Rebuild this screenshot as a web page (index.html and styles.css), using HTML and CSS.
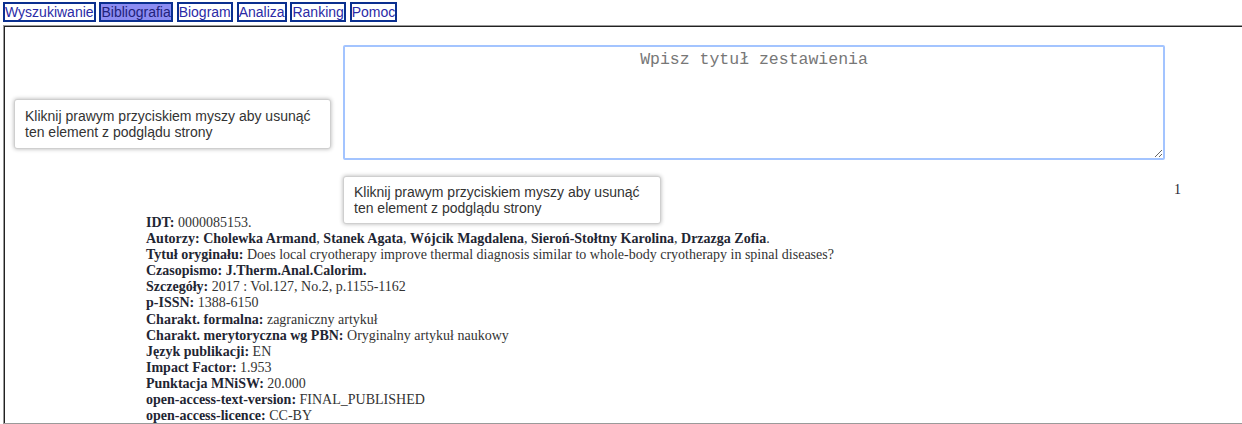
FILE: index.html
```html
<!DOCTYPE html>
<html lang="pl">
  <head>
    <meta charset="UTF-8" />
    <meta name="viewport" content="width=device-width, initial-scale=1.0" />
    <title>Bibliografia</title>
    <link rel="stylesheet" href="styles.css">
  </head>
  <body>
    <div class="menu">
      <a class="tab" href="#">Wyszukiwanie</a>
      <a class="tab active" href="#">Bibliografia</a>
      <a class="tab" href="#">Biogram</a>
      <a class="tab" href="#">Analiza</a>
      <a class="tab" href="#">Ranking</a>
      <a class="tab" href="#">Pomoc</a>
    </div>

    <div class="frame">
      <div class="title-box">
        <textarea class="title-input" placeholder="Wpisz tytuł zestawienia"></textarea>
      </div>

      <div class="page-row">
        <span class="page-no">1</span>
      </div>

      <div class="record">
        <div><b>IDT:</b> 0000085153.</div>
        <div>
          <b>Autorzy:</b> <b>Cholewka Armand</b>, <b>Stanek Agata</b>,
          <b>Wójcik Magdalena</b>, <b>Sieroń-Stołtny Karolina</b>,
          <b>Drzazga Zofia</b>.
        </div>
        <div><b>Tytuł oryginału:</b> Does local cryotherapy improve thermal diagnosis similar to whole-body cryotherapy in spinal diseases?</div>
        <div><b>Czasopismo: J.Therm.Anal.Calorim.</b></div>
        <div><b>Szczegóły:</b> 2017 : Vol.127, No.2, p.1155-1162</div>
        <div><b>p-ISSN:</b> 1388-6150</div>
        <div><b>Charakt. formalna:</b> zagraniczny artykuł</div>
        <div><b>Charakt. merytoryczna wg PBN:</b> Oryginalny artykuł naukowy</div>
        <div><b>Język publikacji:</b> EN</div>
        <div><b>Impact Factor:</b> 1.953</div>
        <div><b>Punktacja MNiSW:</b> 20.000</div>
        <div><b>open-access-text-version:</b> FINAL_PUBLISHED</div>
        <div><b>open-access-licence:</b> CC-BY</div>
      </div>
    </div>

    <!-- hints shown over the preview -->
    <div class="hint hint-left">Kliknij prawym przyciskiem myszy aby usunąć ten element z podglądu strony</div>
    <div class="hint hint-mid">Kliknij prawym przyciskiem myszy aby usunąć ten element z podglądu strony</div>
  </body>
</html>
```

FILE: styles.css
```css
html {
  overflow: hidden;
}
body {
  margin: 2px 0 0 3px;
  font-family: "Liberation Sans", Arial, sans-serif;
  font-size: 14px;
  line-height: 16px;
  background: #fff;
}
.menu {
  height: 20px;
  white-space: nowrap;
}
.tab {
  display: inline-block;
  border: 2px solid #0a2f8f;
  padding: 0;
  color: #2b2ba6;
  text-decoration: none;
  background: #fff;
}
.tab.active {
  background: #8c8cf2;
  color: #22227a;
}
.frame {
  margin-top: 3px;
  width: 1280px;
  height: 396px;
  border: 1px solid #9a9a9a;
  box-shadow: inset 1px 1px 0 #222;
  padding: 1px 0 0 1px;
}
.title-box {
  padding: 18px 0 0 338px;
}
.title-input {
  display: block;
  box-sizing: border-box;
  width: 822px;
  height: 115px;
  margin: 0;
  padding: 4px;
  border: 2px solid #a3c4ff;
  border-radius: 2px;
  outline: none;
  font-family: "Liberation Mono", "DejaVu Sans Mono", monospace;
  font-size: 16.5px;
  line-height: 18px;
  text-align: center;
  color: #333;
}
.title-input::placeholder {
  color: #777;
}
.page-row {
  margin-top: 22px;
  padding-left: 1169px;
  font-family: "Liberation Serif", "Times New Roman", serif;
  font-size: 14px;
  line-height: 16px;
  color: #1f2633;
}
.record {
  margin-top: 17px;
  padding-left: 141px;
  font-family: "Liberation Serif", "Times New Roman", serif;
  font-size: 14px;
  line-height: 16.1px;
  color: #333;
}
.record b {
  color: #1f2633;
}
.hint {
  position: absolute;
  box-sizing: border-box;
  background: #fff;
  border: 1px solid #cfcfcf;
  border-radius: 3px;
  box-shadow: 0 0 4px rgba(0, 0, 0, 0.3);
  padding: 8px 10px;
  font-family: "Liberation Sans", Arial, sans-serif;
  font-size: 14px;
  line-height: 16px;
  color: #333;
}
.hint-left {
  left: 14px;
  top: 99px;
  width: 317px;
  height: 50px;
}
.hint-mid {
  left: 343px;
  top: 176px;
  width: 318px;
  height: 48px;
  padding-top: 7px;
}
```
